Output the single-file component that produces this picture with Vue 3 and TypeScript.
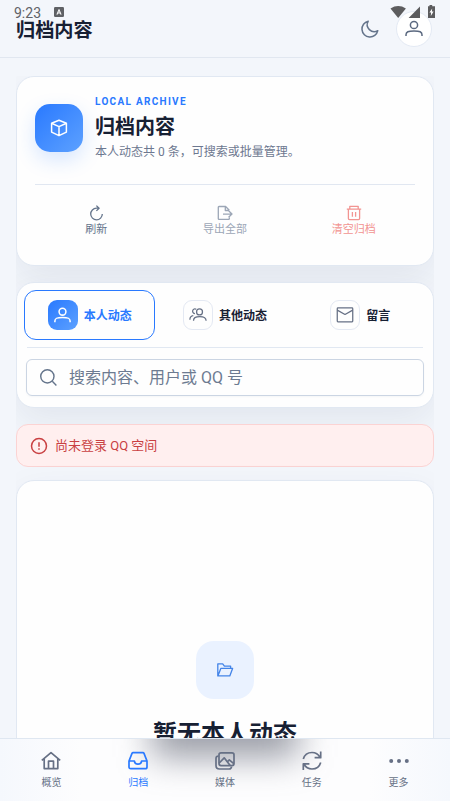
<script setup lang="ts">
import { ref } from 'vue'

interface Entry {
  key: string
  label: string
}

const actions: Entry[] = [
  { key: 'refresh', label: '刷新' },
  { key: 'export', label: '导出全部' },
  { key: 'clear', label: '清空归档' },
]
const tabs: Entry[] = [
  { key: 'mine', label: '本人动态' },
  { key: 'others', label: '其他动态' },
  { key: 'messages', label: '留言' },
]
const navItems: Entry[] = [
  { key: 'home', label: '概览' },
  { key: 'archive', label: '归档' },
  { key: 'media', label: '媒体' },
  { key: 'tasks', label: '任务' },
  { key: 'more', label: '更多' },
]
const activeTab = ref('mine')
const activeNav = ref('archive')
const keyword = ref('')
</script>

<template>
  <div class="screen">
    <div class="status">
      <span class="clock">9:23</span>
      <svg class="badge-a" viewBox="0 0 10 10"><rect width="10" height="10" rx="1.2" fill="#5f6165" /><path d="M2.9 7.6 5 2.6l2.1 5M3.6 6h2.8" fill="none" stroke="#fff" stroke-width="1.1" /></svg>
      <svg class="signals" viewBox="0 0 46 14" fill="#5c5c5e">
        <path d="M.5 3.4Q8.2-1.4 15.9 3.4L8.2 13Z" />
        <path d="M30 1.6V13H18.6Z" />
        <path d="M38 1.3h1.5V0h2.7v1.3H45V13h-7V1.3Z" />
        <path d="m42.2 3.5-2.8 4h1.7L40.8 11l2.8-4.4h-1.7Z" fill="#fff" />
      </svg>
    </div>

    <header class="header">
      <h1>归档内容</h1>
      <svg class="moon" viewBox="0 0 20 20"><path d="M8.2 2.2A8 8 0 1 0 17.8 11.7 7 7 0 0 1 8.2 2.2Z" /></svg>
      <button class="avatar" aria-label="账号">
        <svg viewBox="0 0 20 20"><circle cx="10" cy="6" r="3.6" /><path d="M2 17v-1.2c0-3 2.1-3.8 8-3.8s8 .8 8 3.8V17" /></svg>
      </button>
    </header>

    <main class="content">
      <section class="card hero">
        <div class="hero-top">
          <div class="hero-icon">
            <svg viewBox="0 0 18 18"><path d="m9 1.3 7.4 3v8.8L9 16.7l-7.4-3.6V4.3ZM1.6 4.3 9 7.6l7.4-3.3M9 7.6v9.1" /></svg>
          </div>
          <div class="hero-text">
            <span class="eyebrow">LOCAL ARCHIVE</span>
            <h2>归档内容</h2>
            <p>本人动态共 0 条，可搜索或批量管理。</p>
          </div>
        </div>
        <div class="actions">
          <button v-for="a in actions" :key="a.key" class="action" :class="a.key">
            <svg v-if="a.key === 'refresh'" viewBox="0 0 16 16"><path d="M10.8 3.2H8.4A5.8 5.8 0 1 0 14.3 9M8.4.6l2.7 2.6-2.7 2.7" /></svg>
            <svg v-else-if="a.key === 'export'" viewBox="0 0 16 16"><path d="M12.3 5.2 8.6 1.5H2q-.7 0-.7.7v11.5q0 .7.7.7h9.6q.7 0 .7-.7v-1.2M8.3 1.5v4h4M6 9.1h9M11.6 5.8 15 9l-3.4 3.3" /></svg>
            <svg v-else viewBox="0 0 16 16"><path d="M.8 4.2h14.4M3.8 4V1.3h8.4V4M2.4 4.2v9.4q0 1.1 1.1 1.1h9q1.1 0 1.1-1.1V4.2M6.4 7v4.8M9.6 7v4.8" /></svg>
            <span>{{ a.label }}</span>
          </button>
        </div>
      </section>

      <section class="card filter">
        <div class="tabs">
          <button v-for="t in tabs" :key="t.key" class="tab" :class="{ active: activeTab === t.key }" @click="activeTab = t.key">
            <span class="tab-icon">
              <svg v-if="t.key === 'mine'" viewBox="0 0 20 20"><circle cx="10" cy="6" r="3.6" /><path d="M2 17v-1.2c0-3 2.1-3.8 8-3.8s8 .8 8 3.8V17" /></svg>
              <svg v-else-if="t.key === 'others'" viewBox="0 0 20 20"><circle cx="11.7" cy="6.6" r="3.3" /><path d="M5 16.4c0-3.3 1.8-4.5 7-4.5s7 1.2 7 4.5M8 3.6a2.6 2.6 0 1 0-1.4 4.8M1 15.4c0-3 .8-4.3 3.8-4.6" /></svg>
              <svg v-else viewBox="0 0 20 20"><rect x="1.4" y="2.2" width="17.2" height="15.4" rx=".8" /><path d="m1.4 4.6 8.6 4.8 8.6-4.8" /></svg>
            </span>
            <span class="tab-label">{{ t.label }}</span>
          </button>
        </div>
        <label class="search">
          <svg viewBox="0 0 20 20"><circle cx="8.8" cy="8.8" r="7" /><path d="m14 14 4.3 4.3" /></svg>
          <input v-model="keyword" placeholder="搜索内容、用户或 QQ 号">
        </label>
      </section>

      <section class="alert">
        <svg viewBox="0 0 18 18"><circle cx="9" cy="9" r="7.5" /><path d="M9 5.2v4.6M9 11.3v1.4" /></svg>
        <span>尚未登录 QQ 空间</span>
      </section>

      <section class="card empty">
        <div class="empty-icon">
          <svg viewBox="0 0 18 18"><path d="M14.6 7.4V5.1H8.4L6.7 2.8H1.8v12.1h12l2.8-7.5H4.8L1.9 14.9" /></svg>
        </div>
        <h2>暂无本人动态</h2>
      </section>
    </main>

    <nav class="nav">
      <button v-for="n in navItems" :key="n.key" class="nav-item" :class="{ active: activeNav === n.key }" @click="activeNav = n.key">
        <svg v-if="n.key === 'home'" viewBox="0 0 20 20"><path d="M.8 9.4 10 1.6l9.2 7.8M3.2 7.6v10h13.6v-10M7.5 17.6v-7.4h5v7.4" /></svg>
        <svg v-else-if="n.key === 'archive'" viewBox="0 0 20 20"><path d="M1 10 4 2.4Q4.3 1.7 5.2 1.7h9.6q.9 0 1.2.7L19 10v5.9q0 1.8-1.8 1.8H2.8Q1 17.7 1 15.9ZM1 10h5.4q.2 3.1 3.6 3.1t3.6-3.1H19" /></svg>
        <svg v-else-if="n.key === 'media'" viewBox="0 0 20 20"><rect x="4" y="1.8" width="15" height="12.8" rx="2" /><path d="M3.5 5Q1 5 1 7.5v7Q1 18 4.5 18h9.7q2 0 2.4-2.4M4.2 12l5-5.2 6 7.8M12.3 10.8l2-1.9 4.5 3.7" /></svg>
        <svg v-else-if="n.key === 'tasks'" viewBox="0 0 20 20"><path d="M1.3 8C2.6 3.5 6 1.5 10 1.5c3.8 0 6.5 2 8.1 5M18.7.6v6.1h-6.1M18.7 11.5c-1.3 4.5-4.7 6.5-8.7 6.5-3.8 0-6.5-2-8.1-5M1.3 18.9v-6.1h6.1" /></svg>
        <svg v-else class="dots" viewBox="0 0 20 20"><circle cx="2.2" cy="10" r="2" /><circle cx="10" cy="10" r="2" /><circle cx="17.8" cy="10" r="2" /></svg>
        <span>{{ n.label }}</span>
      </button>
    </nav>
  </div>
</template>

<style>
body {
  margin: 0;
  background: #f3f6fb;
}
</style>

<style scoped>
.screen {
  position: relative;
  display: flex;
  flex-direction: column;
  height: 801px;
  overflow: hidden;
  background: #f3f6fb;
  color: #172033;
  font-family: Roboto, "Noto Sans CJK SC", sans-serif;
}
* { box-sizing: border-box; }
h1, h2, p { margin: 0; }
button {
  padding: 0;
  border: 0;
  background: none;
  color: inherit;
  font: inherit;
}
svg {
  flex: none;
  fill: none;
  stroke: currentColor;
  stroke-width: 1.5;
  stroke-linejoin: round;
}
.status {
  position: absolute;
  z-index: 2;
  inset: 5px 14px auto;
  display: flex;
  align-items: center;
  height: 16px;
  color: #606267;
}
.clock { font-size: 14px; line-height: 16px; }
.badge-a { width: 10px; height: 10px; margin: -2px 0 0 13px; stroke: none; }
.signals { width: 46px; height: 14px; margin: -2px 0 0 auto; stroke: none; fill: #5c5c5e; }
.header {
  flex: none;
  display: flex;
  align-items: center;
  height: 58px;
  padding: 0 18px 0 16px;
  border-bottom: 1px solid #e1e7f0;
}
h1 {
  flex: 1;
  padding-top: 4px;
  font-size: 19.2px;
  line-height: 26px;
  font-weight: 700;
}
.moon { width: 20px; height: 20px; margin-right: 16px; color: #64748b; }
.avatar {
  display: grid;
  place-items: center;
  width: 36px;
  height: 36px;
  border: 1px solid #e4eaf4;
  border-radius: 50%;
  background: #fff;
  color: #5b6980;
}
.avatar svg { width: 20px; height: 20px; }
.content {
  flex: 1;
  min-height: 0;
  display: flex;
  flex-direction: column;
  margin: 18px 16px 0;
  overflow: hidden;
}
.card {
  flex: none;
  border: 1px solid #e1e8f2;
  border-radius: 18px;
  background: #fefefe;
  box-shadow: 0 14px 36px rgba(31, 45, 85, .08);
}
.hero { height: 190px; padding: 19px 18px; }
.hero-top {
  display: flex;
  gap: 12px;
  height: 89px;
  border-bottom: 1px solid #e1e7f1;
}
.hero-icon {
  display: grid;
  place-items: center;
  width: 48px;
  height: 48px;
  margin-top: 8px;
  border-radius: 15px;
  background: linear-gradient(135deg, #2979ff, #5da1ff);
  box-shadow: 0 8px 20px rgba(41, 121, 255, .18);
  color: #fff;
}
.hero-icon svg { width: 18px; height: 18px; }
.hero-text { display: flex; flex-direction: column; }
.eyebrow {
  color: #2979ff;
  font-size: 10px;
  line-height: 12px;
  font-weight: 700;
  letter-spacing: 1.3px;
}
.hero h2 { margin-top: 5px; font-size: 20px; line-height: 28px; }
.hero p { margin-top: 3px; color: #6d7890; font-size: 12px; line-height: 16px; }
.actions {
  display: grid;
  grid-template-columns: repeat(3, 1fr);
  gap: 6px;
  padding-top: 20px;
}
.action {
  display: flex;
  flex-direction: column;
  align-items: center;
  gap: 1px;
  color: #64748b;
  font-size: 11px;
  line-height: 15px;
}
.action svg { width: 16px; height: 16px; stroke-width: 1.3; }
.action.export { color: #9ca6b6; }
.action.clear { color: #f29491; }
.filter { height: 126px; margin-top: 16px; padding: 7px; }
.tabs { display: grid; grid-template-columns: repeat(3, 1fr); gap: 4px; }
.tab {
  display: flex;
  align-items: center;
  justify-content: center;
  gap: 6px;
  height: 50px;
  border: 1px solid transparent;
  border-radius: 12px;
  font-size: 12px;
  font-weight: 700;
  white-space: nowrap;
}
.tab-label { padding-bottom: 1px; }
.tab.active { border-color: #2979ff; color: #2979ff; }
.tab-icon {
  display: grid;
  place-items: center;
  width: 30px;
  height: 30px;
  border: 1px solid #e4e9f3;
  border-radius: 9px;
  color: #667085;
}
.tab-icon svg { width: 18px; height: 18px; stroke-width: 1.4; }
.active .tab-icon {
  border-color: transparent;
  background: linear-gradient(135deg, #2979ff, #5da1ff) border-box;
  color: #fff;
}
.active .tab-icon svg { width: 19px; height: 19px; stroke-width: 1.6; }
.search {
  position: relative;
  display: flex;
  align-items: center;
  gap: 11px;
  height: 37px;
  margin: 19px 2px 0;
  padding-left: 12px;
  border: 1px solid #cbd5e3;
  border-radius: 6px;
  box-shadow: 0 1px 2px rgba(31, 45, 85, .04);
}
.search::before {
  content: "";
  position: absolute;
  inset: -13px 0 auto;
  height: 1px;
  background: #e1e8f2;
}
.search svg { width: 19px; height: 19px; color: #64748b; }
.search input {
  flex: 1;
  min-width: 0;
  padding: 0;
  border: 0;
  outline: 0;
  background: none;
  font: 16px/24px Roboto, "Noto Sans CJK SC", sans-serif;
}
.search input::placeholder { color: #6d7b91; opacity: 1; }
.alert {
  flex: none;
  position: relative;
  display: flex;
  align-items: center;
  gap: 7px;
  height: 43px;
  margin-top: 16px;
  padding-left: 13px;
  border: 1px solid #fbd3d3;
  border-radius: 12px;
  background: #ffefef;
  color: #c94042;
  font-size: 13px;
}
.alert svg { width: 18px; height: 18px; }
.alert span { padding-bottom: 2px; }
.empty {
  position: relative;
  display: flex;
  flex-direction: column;
  align-items: center;
  height: 400px;
  margin-top: 13px;
  padding-top: 160px;
}
.empty-icon {
  display: grid;
  place-items: center;
  width: 58px;
  height: 58px;
  border-radius: 18px;
  background: #eaf2ff;
  color: #4384e8;
}
.empty-icon svg { width: 18px; height: 18px; stroke-width: 1.3; }
.empty h2 { margin-top: 17px; font-size: 24px; line-height: 36px; }
.nav {
  position: relative;
  z-index: 1;
  flex: none;
  display: grid;
  grid-template-columns: repeat(5, 1fr);
  height: 63px;
  padding: 12px 8px 0;
  overflow: hidden;
  border-top: 1px solid #dfe7f1;
  background: linear-gradient(90deg, #f5f8fd, #fdfdfe 18%, #fdfdfe 82%, #f5f8fd);
}
.nav::before {
  content: "";
  position: absolute;
  left: 152px;
  top: -32px;
  width: 146px;
  height: 50px;
  background: rgba(90, 96, 112, .62);
  filter: blur(17px);
}
.nav-item {
  position: relative;
  display: flex;
  flex-direction: column;
  align-items: center;
  gap: 4px;
  color: #667085;
  font-size: 10px;
  line-height: 15px;
}
.nav-item.active { color: #2979ff; }
.nav-item svg { width: 20px; height: 20px; stroke-width: 1.7; }
.nav-item .dots { fill: currentColor; stroke: none; }
</style>
